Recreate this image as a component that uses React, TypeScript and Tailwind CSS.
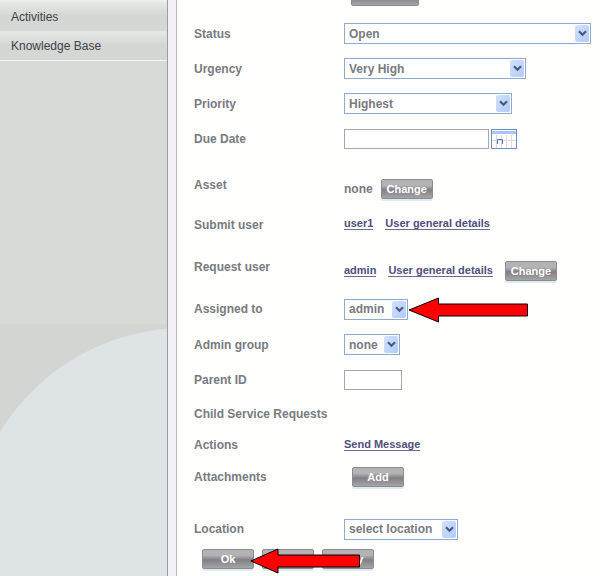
import React from "react";
import clsx from "clsx";

const Chevron = () => (
  <span className="pointer-events-none absolute top-[2px] right-[2px] bottom-[2px] flex w-[14px] items-center justify-center rounded-xs bg-linear-to-br from-[#d3e1fc] to-[#b1cafa]">
    <svg width="9" height="7" viewBox="0 0 9 7" fill="none" aria-hidden="true">
      <path d="M1 1.2L4.5 4.7L8 1.2" stroke="#465a80" strokeWidth="2.2" />
    </svg>
  </span>
);

type SelectProps = {
  id: string;
  value: string;
  className: string;
  children?: React.ReactNode;
};

const Select = ({ id, value, className, children }: SelectProps) => (
  <div className={clsx("relative", className)}>
    <select
      id={id}
      name={id}
      className="block h-[21px] w-full appearance-none border border-[#8eabce] bg-white pl-1 text-xs leading-4 font-bold text-[#787b80]"
    >
      <option>{value}</option>
    </select>
    <Chevron />
    {children}
  </div>
);

type ButtonProps = {
  children?: React.ReactNode;
  label?: string;
  className?: string;
};

const Button = ({ children, label, className }: ButtonProps) => (
  <button
    type="button"
    aria-label={label}
    className={clsx(
      "h-5 shrink-0 rounded-xs border border-[#8d8b8e] bg-linear-to-b from-[#b3b2b4] from-30% via-[#838085] via-55% to-[#a5a4a6] text-center text-[11px] leading-4 font-bold text-white shadow-[0_2px_0_#dcebf1]",
      className ?? "w-[52px]"
    )}
  >
    {children}
  </button>
);

const TextLink = ({ children }: { children: React.ReactNode }) => (
  <a href="#" className="border-b border-[#6d6c98] text-[11px] leading-3 font-bold text-[#504f7c]">
    {children}
  </a>
);

type RowProps = {
  label: string;
  htmlFor?: string;
  className: string;
  labelClassName?: string;
  children?: React.ReactNode;
};

const Row = ({ label, htmlFor, className, labelClassName, children }: RowProps) => (
  <div className={clsx("flex items-center", className)}>
    <div className={clsx("w-[150px] shrink-0 leading-4", labelClassName)}>
      {htmlFor ? <label htmlFor={htmlFor}>{label}</label> : label}
    </div>
    <div className="flex min-w-0 flex-1 items-center">{children}</div>
  </div>
);

const Arrow = ({ className }: { className: string }) => (
  <svg
    className={clsx("pointer-events-none absolute", className)}
    viewBox="0 0 120 26"
    preserveAspectRatio="none"
    aria-hidden="true"
  >
    <path
      d="M1 13L30.500 1V7H119.500V19H30.500V25Z"
      fill="#fe0000"
      stroke="#000"
      strokeWidth="1"
      vectorEffect="non-scaling-stroke"
    />
  </svg>
);

const CalendarIcon = () => (
  <svg width="26" height="20" viewBox="0 0 26 20" fill="none" aria-hidden="true">
    <rect x="0.5" y="0.5" width="25" height="19" fill="#fff" stroke="#6f8fc0" />
    <path d="M1 3.500H25" stroke="#a9c6fa" strokeWidth="3" />
    <path d="M1 11.500H25M5.500 6V19M10.500 6V19M15.500 6V19M20.500 6V19" stroke="#dcdcd8" />
    <path d="M6.500 15V10.500H11.500V15" stroke="#5272b4" />
  </svg>
);

const Sidebar = () => (
  <aside className="flex w-[168px] shrink-0 flex-col border-r border-[#9b9e9d] bg-[#d8dad5]">
    <nav className="border-t-2 border-b border-t-[#eceeec] border-b-[#f4f6f4] text-xs text-[#3f4348]">
      {["Activities", "Knowledge Base"].map((item) => (
        <a
          key={item}
          href="#"
          className="flex h-[29px] items-center bg-linear-to-b from-[#e4e7e4] from-5% via-[#d3d6d3] via-50% to-[#d5d8d5] pl-[11px]"
        >
          {item}
        </a>
      ))}
    </nav>
    <svg
      className="mt-[263px] min-h-0 w-full flex-1 bg-[#d3d5d2]"
      viewBox="0 0 167 252"
      preserveAspectRatio="xMinYMin slice"
      aria-hidden="true"
    >
      <circle cx="185" cy="220.500" r="216.500" fill="#dee4e6" />
    </svg>
  </aside>
);

export default function App() {
  return (
    <div className="flex min-h-screen bg-[#fefefd] font-['Liberation_Sans',Arial,sans-serif]">
      <Sidebar />
      <div className="w-[9px] shrink-0 border-r border-[#bab9bd] bg-[#f3f0f8]" />

      <main className="min-w-0 flex-1 pr-[9px] pb-[6px] pl-[17px] text-xs font-bold text-[#787b80]">
        <div className="mb-[10px] flex h-[6px] items-end overflow-hidden pl-[157px]">
          <Button label="Change" className="w-[68px]" />
        </div>

        <Row label="Status" htmlFor="status" className="h-[35px]">
          <Select id="status" value="Open" className="w-full" />
        </Row>
        <Row label="Urgency" htmlFor="urgency" className="h-[35px]">
          <Select id="urgency" value="Very High" className="w-[182px]" />
        </Row>
        <Row label="Priority" htmlFor="priority" className="h-[35px]">
          <Select id="priority" value="Highest" className="w-[168px]" />
        </Row>
        <Row label="Due Date" htmlFor="due-date" className="h-9">
          <input
            id="due-date"
            type="text"
            className="h-5 w-[145px] border border-[#a5a7a8] bg-white px-1"
          />
          <button type="button" aria-label="Pick a date" className="ml-[2px]">
            <CalendarIcon />
          </button>
        </Row>

        <Row label="Asset" className="mt-3 h-10" labelClassName="pb-2">
          <span className="mr-2">none</span>
          <Button>Change</Button>
        </Row>
        <Row label="Submit user" className="h-8">
          <div className="flex gap-3 pb-1">
            <TextLink>user1</TextLink>
            <TextLink>User general details</TextLink>
          </div>
        </Row>
        <Row label="Request user" className="mt-[9px] h-[41px]" labelClassName="pb-2">
          <div className="mr-3 flex gap-3">
            <TextLink>admin</TextLink>
            <TextLink>User general details</TextLink>
          </div>
          <Button>Change</Button>
        </Row>
        <Row label="Assigned to" htmlFor="assigned-to" className="h-9">
          <Select id="assigned-to" value="admin" className="w-16">
            <Arrow className="top-[-2px] left-full h-[26px] w-[120px]" />
          </Select>
        </Row>
        <Row label="Admin group" htmlFor="admin-group" className="h-[35px]">
          <Select id="admin-group" value="none" className="w-14" />
        </Row>
        <Row label="Parent ID" htmlFor="parent-id" className="h-9">
          <input
            id="parent-id"
            type="text"
            className="h-5 w-[58px] border border-[#a5a7a8] bg-white px-1"
          />
        </Row>
        <Row label="Child Service Requests" className="h-8" labelClassName="whitespace-nowrap" />
        <Row label="Actions" className="h-[29px]">
          <TextLink>Send Message</TextLink>
        </Row>
        <Row label="Attachments" className="h-9">
          <div className="pl-2">
            <Button>Add</Button>
          </div>
        </Row>
        <Row label="Location" htmlFor="location" className="mt-4 h-9">
          <Select id="location" value="select location" className="w-[114px]" />
        </Row>

        <div className="relative mt-[2px] flex gap-2 pl-2">
          <Button>Ok</Button>
          <Button>Cancel</Button>
          <Button>Apply</Button>
          <Arrow className="top-[-1px] left-14 h-[26px] w-[110px]" />
        </div>
      </main>
    </div>
  );
}
